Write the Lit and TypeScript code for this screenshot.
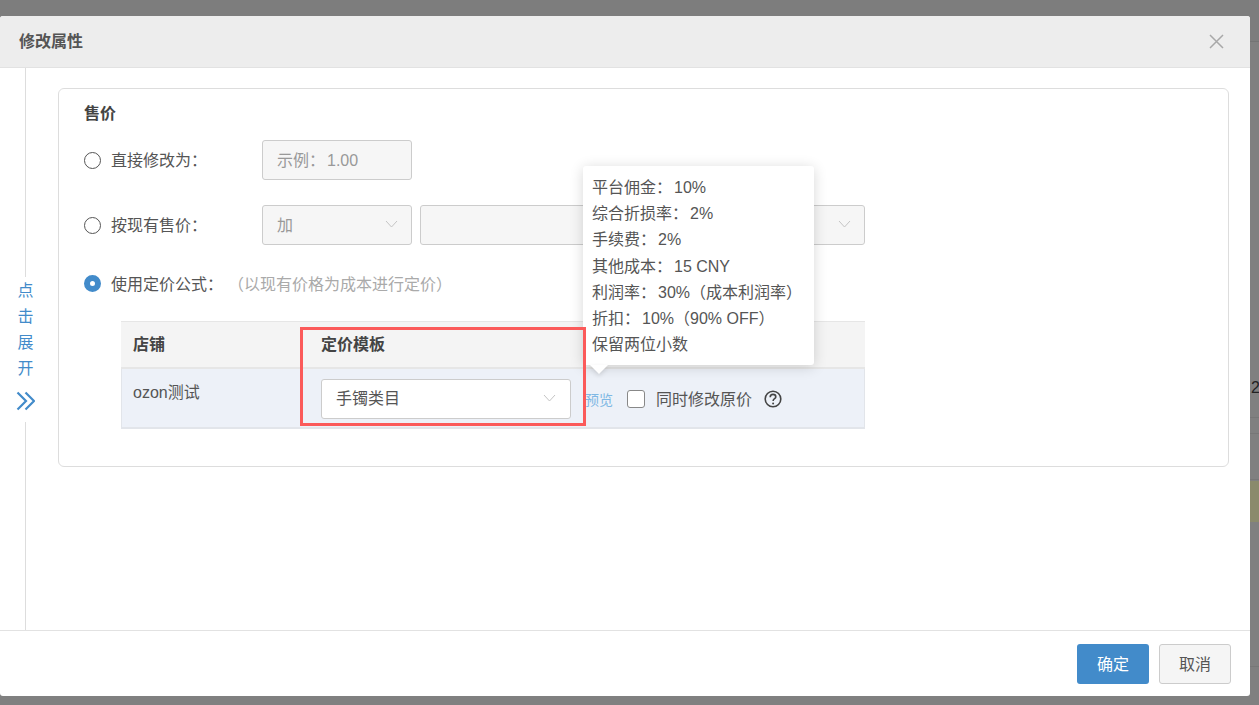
import { LitElement, html, css } from "lit";
import { customElement } from "lit/decorators.js";

const chevron = () => html`<svg class="chev" width="13" height="8" viewBox="0 0 13 8"><polyline points="1,1 6.5,7 12,1" fill="none" stroke="#c4c4c4" stroke-width="1"/></svg>`;

const TIPS: [string, string][] = [
  ["平台佣金：", "10%"],
  ["综合折损率：", "2%"],
  ["手续费：", "2%"],
  ["其他成本：", "15 CNY"],
  ["利润率：", "30%（成本利润率）"],
  ["折扣：", "10%（90% OFF）"],
  ["保留两位小数", ""],
];

@customElement("app-root")
export class AppRoot extends LitElement {
  static styles = css`
    :host {
      display: block;
      position: relative;
      width: 1259px;
      height: 705px;
      overflow: hidden;
      background: #808080;
      font-family: "Liberation Sans", "Noto Sans CJK SC", sans-serif;
      font-size: 16px;
      color: #555;
    }
    .backdrop { position: absolute; inset: 0; color: #222; }
    .bg-top { position: absolute; left: 0; right: 0; top: 0; height: 41px; background: #7d7d7d; border-bottom: 1px solid #747474; }
    .bg-line { position: absolute; left: 0; right: 0; height: 1px; background: #777; }
    .bg-yellow { position: absolute; left: 0; right: 0; top: 481px; height: 41px; background: #8a8a6c; }
    .bg-two { position: absolute; left: 1251px; top: 379px; font-size: 16px; line-height: 18px; }
    .bg-text { position: absolute; top: 682px; font-size: 16px; line-height: 18px; white-space: nowrap; color: #333; }
    .modal {
      position: absolute; left: 0; top: 16px;
      width: 1250px; height: 680px;
      display: flex; flex-direction: column;
      background: #fff; border-radius: 3px; overflow: hidden;
    }
    .header {
      flex: none; height: 51px; box-sizing: content-box;
      display: flex; align-items: center; justify-content: space-between;
      padding: 0 26px 0 19px;
      background: #ededed; border-bottom: 1px solid #e2e2e2;
    }
    .title { font-size: 16px; font-weight: 700; color: #555; line-height: 50px; }
    .close { display: block; }
    .body { flex: 1; min-height: 0; display: flex; }
    .side { flex: none; width: 51px; display: flex; flex-direction: column; align-items: center; }
    .seg { flex: 1; width: 1px; background: #ddd; }
    .expand { flex: none; height: 145px; display: flex; flex-direction: column; align-items: center; color: #428bca; line-height: 26.3px; padding-top: 1px; box-sizing: border-box; }
    .expand span { display: block; }
    .expand svg { margin-top: 8px; display: block; }
    .content { flex: 1; padding: 20px 21px 0 7px; }
    .panel {
      height: 379px; box-sizing: border-box;
      border: 1px solid #ddd; border-radius: 6px;
      padding: 14px 25px 0;
    }
    .ptitle { font-weight: 700; color: #444; line-height: 22px; margin-bottom: 15px; }
    .row { display: flex; align-items: center; height: 40px; margin-bottom: 25px; }
    .row.formula { height: 22px; margin: 27px 0 27px; }
    .radio-label { width: 178px; flex: none; display: flex; align-items: center; }
    .radio-label span { padding-bottom: 2px; }
    .radio { flex: none; width: 17px; height: 17px; box-sizing: border-box; border: 1.5px solid #555; border-radius: 50%; margin-right: 10px; background: #fff; }
    .radio.on { border: 6px solid #428bca; }
    .formula .radio-label { width: auto; }
    .formula .radio-label span { padding-bottom: 0; }
    .hint { color: #aaa; margin-left: 5px; }
    .field {
      box-sizing: border-box; height: 40px; width: 150px;
      border: 1px solid #ccc; border-radius: 3px; background: #f6f6f6;
      padding: 0 13px 2px 14px; color: #999;
      display: flex; align-items: center; justify-content: space-between;
    }
    .field.wide { width: 445px; margin-left: 8px; }
    .colon { margin-right: 2px; }
    .table-wrap { position: relative; margin-left: 37px; width: 744px; }
    .thead { display: flex; height: 45px; box-sizing: content-box; align-items: center; background: #f4f4f4; border-top: 1px solid #e6e6e6; border-bottom: 2px solid #e6e6e6; font-weight: 700; color: #444; }
    .thead div { padding-bottom: 4px; }
    .tbody { display: flex; height: 58px; background: #edf1f8; border-bottom: 2px solid #e2e5ea; border-left: 1px solid #e2e5ea; border-right: 1px solid #e2e5ea; }
    .c1 { flex: none; width: 176px; padding-left: 12px; }
    .tbody .c1 { width: 176px; padding-left: 11px; padding-top: 13px; line-height: 22px; }
    .c2 { padding-left: 12px; }
    .tbody .c2 { display: flex; align-items: center; padding: 2px 0 0 12px; }
    .tsel {
      box-sizing: border-box; width: 250px; height: 40px;
      background: #fff; border: 1px solid #ccc; border-radius: 3px;
      padding: 0 14px 4px 14px; color: #555;
      display: flex; align-items: center; justify-content: space-between;
    }
    .tsel svg { margin-top: 2px; }
    .preview { margin-left: 14px; color: #7fb8e4; font-size: 14px; }
    .check { width: 18px; height: 18px; box-sizing: border-box; border: 1.5px solid #888; border-radius: 3px; background: #fff; margin: 0 11px 0 14px; }
    .sync { padding-bottom: 2px; }
    .help { margin-left: 12px; display: block; }
    .redbox { position: absolute; left: 179px; top: 6px; width: 286px; height: 99px; box-sizing: border-box; border: 3px solid #fb5a5a; z-index: 3; pointer-events: none; }
    .tip {
      position: absolute; left: 462px; top: -155px; width: 231px; height: 199px; box-sizing: border-box;
      padding: 9px 9px; background: #fff; border-radius: 3px;
      box-shadow: 0 2px 14px rgba(0,0,0,.16); line-height: 26.2px; color: #555; z-index: 2; white-space: nowrap;
    }
    .tip::after {
      content: ""; position: absolute; left: 7px; bottom: -9px; width: 0; height: 0;
      border-left: 9.5px solid transparent; border-right: 9.5px solid transparent; border-top: 9.5px solid #fff;
      filter: drop-shadow(0 2px 2px rgba(0,0,0,.12));
    }
    .footer {
      flex: none; border-top: 1px solid #e2e2e2;
      display: flex; align-items: flex-start; justify-content: flex-end; gap: 10px;
      padding: 13px 19px 0 0; box-sizing: content-box; height: 52px;
    }
    .btn { box-sizing: border-box; width: 72px; height: 40px; border-radius: 3px; display: flex; align-items: center; justify-content: center; padding-bottom: 2px; }
    .btn.primary { background: #428bca; color: #fff; }
    .btn.default { background: #f5f5f5; border: 1px solid #ccc; color: #555; }
  `;

  render() {
    return html`
      <div class="backdrop">
        <div class="bg-top"></div>
        <div class="bg-line" style="top:417px"></div>
        <div class="bg-line" style="top:433px"></div>
        <div class="bg-line" style="top:479px"></div>
        <div class="bg-yellow"></div>
        <div class="bg-line" style="top:666px"></div>
        <div class="bg-two">2</div>
        <div class="bg-text" style="left:458px">1.11.11.1</div>
        <div class="bg-text" style="left:915px">000-222.00</div>
        <div class="bg-text" style="left:1143px">000-222.00</div>
      </div>
      <div class="modal">
        <div class="header">
          <span class="title">修改属性</span>
          <svg class="close" width="15" height="15" viewBox="0 0 15 15">
            <path d="M1 1 L14 14 M14 1 L1 14" stroke="#a8a8a8" stroke-width="1.5" fill="none"/>
          </svg>
        </div>
        <div class="body">
          <div class="side">
            <div class="seg"></div>
            <div class="expand">
              <span>点</span><span>击</span><span>展</span><span>开</span>
              <svg width="19" height="20" viewBox="0 0 19 20">
                <path d="M1.5 1.5 L10 10 L1.5 18.5 M9.5 1.5 L18 10 L9.5 18.5" fill="none" stroke="#428bca" stroke-width="2.2"/>
              </svg>
            </div>
            <div class="seg"></div>
          </div>
          <div class="content">
            <div class="panel">
              <div class="ptitle">售价</div>
              <div class="row">
                <div class="radio-label"><div class="radio"></div><span>直接修改为：</span></div>
                <div class="field"><div><span class="colon">示例：</span>1.00</div></div>
              </div>
              <div class="row">
                <div class="radio-label"><div class="radio"></div><span>按现有售价：</span></div>
                <div class="field"><span>加</span>${chevron()}</div>
                <div class="field wide"><span></span>${chevron()}</div>
              </div>
              <div class="row formula">
                <div class="radio-label"><div class="radio on"></div><span>使用定价公式：</span></div>
                <span class="hint">（以现有价格为成本进行定价）</span>
              </div>
              <div class="table-wrap">
                <div class="thead"><div class="c1">店铺</div><div class="c2">定价模板</div></div>
                <div class="tbody">
                  <div class="c1">ozon测试</div>
                  <div class="c2">
                    <div class="tsel"><span>手镯类目</span>${chevron()}</div>
                    <span class="preview">预览</span>
                    <div class="check"></div>
                    <span class="sync">同时修改原价</span>
                    <svg class="help" width="18" height="18" viewBox="0 0 18 18">
                      <circle cx="9" cy="9" r="7.8" fill="none" stroke="#444" stroke-width="1.6"/>
                      <path d="M6.2 7.2 C6.2 5.3 7.7 4.4 9 4.4 C10.5 4.4 11.8 5.4 11.8 6.9 C11.8 8.7 9.1 8.8 9.1 11" fill="none" stroke="#444" stroke-width="1.6"/>
                      <circle cx="9.1" cy="13.4" r="1" fill="#444"/>
                    </svg>
                  </div>
                </div>
                <div class="tip">${TIPS.map(([a, b]) => html`<div><span class=${b ? "colon" : ""}>${a}</span>${b}</div>`)}</div>
                <div class="redbox"></div>
              </div>
            </div>
          </div>
        </div>
        <div class="footer">
          <div class="btn primary">确定</div>
          <div class="btn default">取消</div>
        </div>
      </div>
    `;
  }
}
